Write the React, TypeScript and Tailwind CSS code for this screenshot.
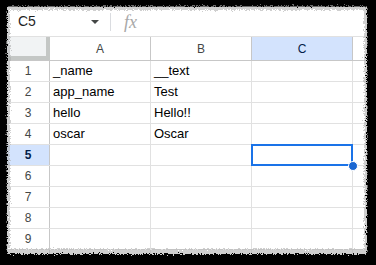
// Spreadsheet screenshot with torn black frame

const cells: [string, string][] = [
  ['_name', '__text'],
  ['app_name', 'Test'],
  ['hello', 'Hello!!'],
  ['oscar', 'Oscar'],
  ['', ''],
  ['', ''],
  ['', ''],
  ['', ''],
  ['', ''],
  ['', ''],
]

function Arrow() {
  return (
    <svg width="8" height="4" viewBox="0 0 8 4">
      <path d="M0 0h8L4 4z" fill="#444746" />
    </svg>
  )
}

function FormulaBar() {
  return (
    <div className="flex items-center h-[30px] border-b border-[#e1e1e1]">
      <div className="w-[97px] flex items-center justify-between pl-[11px] pr-[5px]">
        <span className="text-[14px] text-[#1f1f1f]">C5</span>
        <Arrow />
      </div>
      <div className="ml-[6px] w-px h-[18px] bg-[#dadce0]" />
      <span className="ml-[13px] text-[18px] italic text-[#a8a8a8] font-['Liberation_Serif',serif] leading-none">
        fx
      </span>
    </div>
  )
}

function HeaderRow() {
  return (
    <div className="flex h-[24px] border-b border-[#c7c7c7] text-[12px] text-[#444746]">
      <div className="w-[43px] shrink-0 bg-[#f1f3f4] border-r-[4px] border-[#c4c7c5] relative">
        <div className="absolute left-0 right-0 bottom-0 h-[4px] bg-[#c4c7c5]" />
      </div>
      <div className="w-[101px] shrink-0 border-r border-[#c7c7c7] flex items-center justify-center">A</div>
      <div className="w-[101px] shrink-0 border-r border-[#c7c7c7] flex items-center justify-center">B</div>
      <div className="w-[101px] shrink-0 border-r border-[#c7c7c7] flex items-center justify-center bg-[#d3e3fd] text-[#041e49]">
        C
      </div>
      <div className="flex-1" />
    </div>
  )
}

function Row({ n, a, b }: { n: number; a: string; b: string }) {
  const active = n === 5
  return (
    <div className="flex h-[21px] border-b border-[#e1e1e1] text-[13px] text-black">
      <div
        className={
          active
            ? 'w-[43px] shrink-0 border-r border-[#c7c7c7] bg-[#d3e3fd] flex items-center justify-center text-[12px] font-bold text-[#041e49]'
            : 'w-[43px] shrink-0 border-r border-[#c7c7c7] flex items-center justify-center text-[12px] text-[#444746]'
        }
      >
        {n}
      </div>
      <div className="w-[101px] shrink-0 border-r border-[#e1e1e1] flex items-center pl-[3px]">{a}</div>
      <div className="w-[101px] shrink-0 border-r border-[#e1e1e1] flex items-center pl-[3px]">{b}</div>
      <div className="w-[101px] shrink-0 border-r border-[#e1e1e1] relative">
        {active && (
          <>
            <div className="absolute -left-px -top-px -right-px -bottom-px border-2 border-[#1a73e8]" />
            <div className="absolute -right-[6px] -bottom-[6px] w-[10px] h-[10px] rounded-full bg-[#1a67d2] border border-white z-10" />
          </>
        )}
      </div>
      <div className="flex-1" />
    </div>
  )
}

function TornEdge() {
  return (
    <svg className="absolute inset-0 pointer-events-none" width="376" height="265" viewBox="0 0 376 265">
      <defs>
        <filter id="rough-a" x="-5%" y="-5%" width="110%" height="110%">
          <feTurbulence type="fractalNoise" baseFrequency="0.9" numOctaves="2" seed="3" result="n" />
          <feDisplacementMap in="SourceGraphic" in2="n" scale="6" xChannelSelector="R" yChannelSelector="G" />
        </filter>
        <filter id="rough-b" x="-5%" y="-5%" width="110%" height="110%">
          <feTurbulence type="fractalNoise" baseFrequency="1.3" numOctaves="2" seed="7" result="n" />
          <feDisplacementMap in="SourceGraphic" in2="n" scale="6" xChannelSelector="G" yChannelSelector="R" />
        </filter>
      </defs>
      <path
        fillRule="evenodd"
        fill="#b0b0b0"
        opacity="0.6"
        filter="url(#rough-b)"
        d="M-20 -20H396V285H-20Z M10 10H364V249H10Z"
      />
      <path
        fillRule="evenodd"
        fill="#000"
        filter="url(#rough-a)"
        d="M-20 -20H396V285H-20Z M7 7Q7 6 9 6H365Q367 6 367 9V252Q367 254 365 254H9Q7 254 7 252Z"
      />
    </svg>
  )
}

export default function App() {
  return (
    <div className="relative w-[376px] h-[265px] bg-black overflow-hidden pl-[7px] pt-[7px] font-['Liberation_Sans',Arial,sans-serif]">
      <div className="w-[360px] h-[250px] bg-white overflow-hidden">
        <FormulaBar />
        <HeaderRow />
        {cells.map(([a, b], i) => (
          <Row key={i} n={i + 1} a={a} b={b} />
        ))}
      </div>
      <TornEdge />
    </div>
  )
}
